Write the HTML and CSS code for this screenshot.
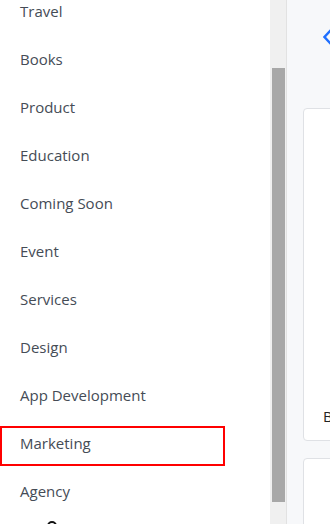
FILE: index.html
```html
<!DOCTYPE html>
<html>
<head>
<meta charset="utf-8">
<link rel="stylesheet" href="styles.css">
</head>
<body>
<div class="app">
  <aside class="sidebar">
    <ul class="menu">
      <li class="item">Travel</li>
      <li class="item">Books</li>
      <li class="item">Product</li>
      <li class="item">Education</li>
      <li class="item">Coming Soon</li>
      <li class="item">Event</li>
      <li class="item">Services</li>
      <li class="item">Design</li>
      <li class="item">App Development</li>
      <li class="item item-active">Marketing</li>
      <li class="item">Agency</li>
      <li class="item item-icon"><span class="ring"></span></li>
    </ul>
  </aside>
  <div class="scrollbar"><div class="thumb"></div></div>
  <main class="main">
    <div class="back">
      <svg width="14" height="18" viewBox="0 0 14 18"><path d="M8 2 L1.5 9 L8 16" fill="none" stroke="#1f6fff" stroke-width="2.4"/></svg>
    </div>
    <div class="card">
      <div class="card-text">B</div>
    </div>
    <div class="card card-2"></div>
  </main>
</div>
</body>
</html>
```
FILE: styles.css
```css
html, body {
  margin: 0;
  padding: 0;
  width: 330px;
  height: 524px;
  overflow: hidden;
  font-family: "Open Sans", "Noto Sans", sans-serif;
}
.app {
  display: flex;
  height: 524px;
  background: #fff;
}
.sidebar {
  width: 270px;
  flex: none;
  overflow: hidden;
  background: #fff;
}
.menu {
  list-style: none;
  margin: -6px 0 0 0;
  padding: 0;
  display: flex;
  flex-direction: column;
  gap: 8px;
}
.item {
  box-sizing: border-box;
  width: 225px;
  height: 40px;
  display: flex;
  align-items: center;
  font-size: 15px;
  color: #454c56;
  border: 2px solid transparent;
  padding-left: 18px;
  padding-bottom: 7px;
}
.item-active {
  border-color: #ff0000;
}
.item-icon {
  padding-left: 45px;
  align-items: flex-start;
  padding-top: 0;
}
.ring {
  display: block;
  width: 6px;
  height: 6px;
  border: 2px solid #111;
  border-radius: 50%;
  margin-top: -3px;
}
.scrollbar {
  width: 17px;
  flex: none;
  background: #f0f0f0;
  border-right: 1px solid #e2e2e2;
  display: flex;
  flex-direction: column;
  align-items: center;
  padding-top: 68px;
  box-sizing: border-box;
}
.thumb {
  width: 13px;
  height: 434px;
  background: #a8a8a8;
}
.main {
  flex: 1;
  background: #f7f8fa;
  padding: 28px 0 0 16px;
  display: flex;
  flex-direction: column;
  overflow: hidden;
}
.back {
  height: 18px;
  padding-left: 20px;
  margin-bottom: 62px;
}
.back svg {
  display: block;
}
.card {
  flex: none;
  box-sizing: border-box;
  width: 60px;
  height: 333px;
  background: #fff;
  border: 1px solid #dfe1e5;
  border-radius: 4px;
  display: flex;
  align-items: flex-end;
  padding: 0 0 14px 19px;
}
.card-text {
  font-size: 15px;
  color: #222;
}
.card-2 {
  margin-top: 17px;
  height: 80px;
}
```
